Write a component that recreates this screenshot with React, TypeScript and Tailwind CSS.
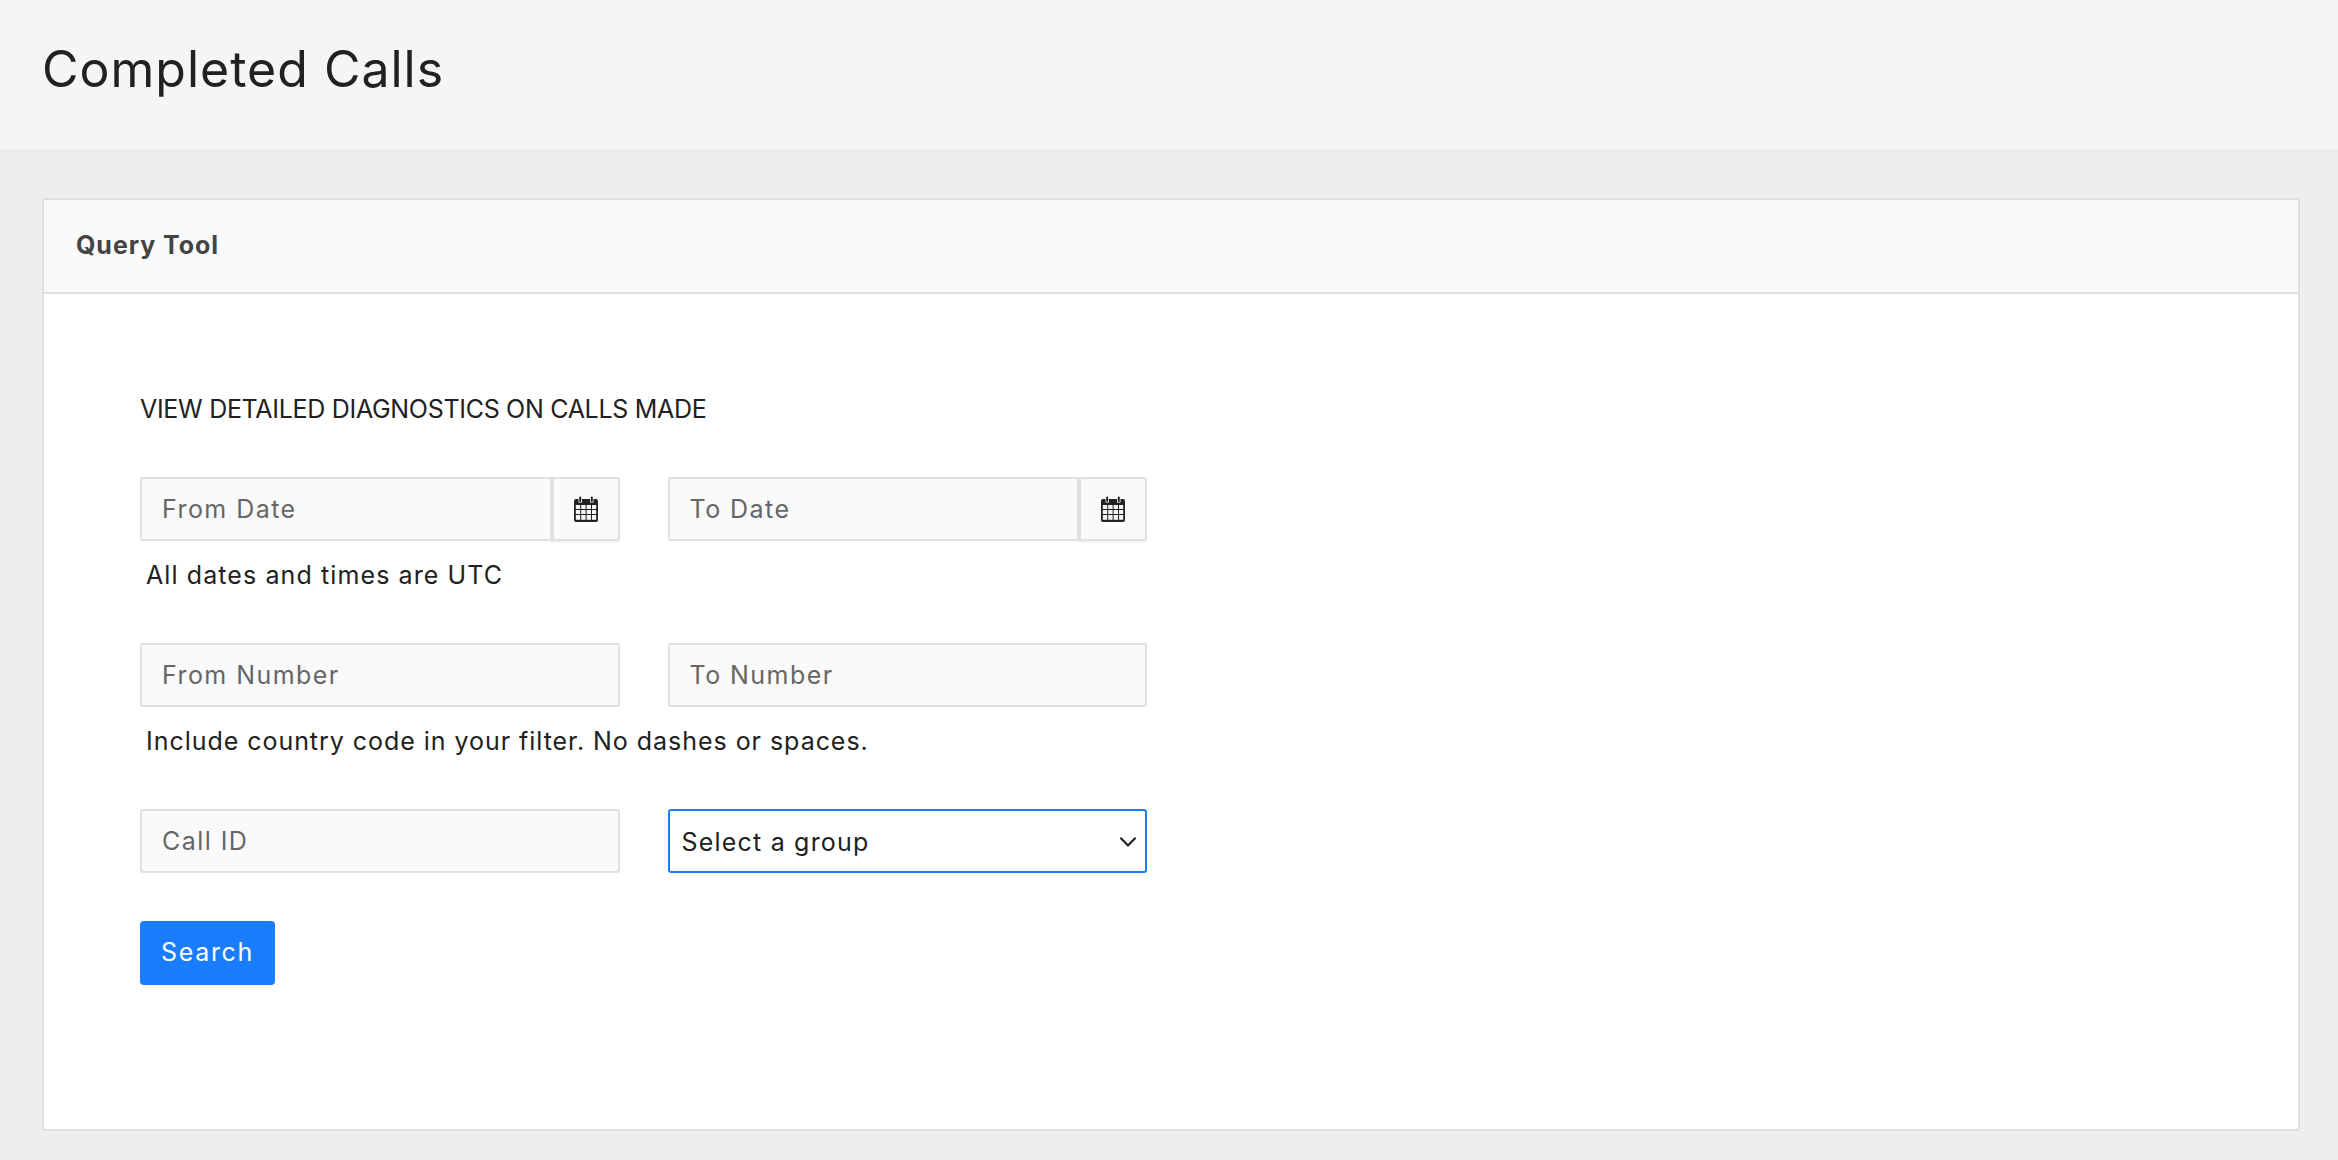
const fieldClass =
  "h-[64px] w-full rounded-[3px] border-2 border-[#e0e0e0] bg-[#fafafa] px-[20px] text-[25px] tracking-[1.45px] text-[#212121] outline-none placeholder:text-[#666666]";

function CalendarIcon() {
  return (
    <svg width="24" height="26" viewBox="0 0 24 26" className="block">
      <path
        d="M2 3h2.5v3.5h3.5V3h8v3.5h3.5V3H22a2 2 0 0 1 2 2v19a2 2 0 0 1-2 2H2a2 2 0 0 1-2-2V5a2 2 0 0 1 2-2z"
        fill="#212121"
      />
      <rect x="5.2" y="0.5" width="2" height="5.5" rx="1" fill="#212121" />
      <rect x="16.8" y="0.5" width="2" height="5.5" rx="1" fill="#212121" />
      <g fill="#f4f4f4">
        <rect x="1.8" y="9" width="4.4" height="4" />
        <rect x="7.2" y="9" width="4.4" height="4" />
        <rect x="12.6" y="9" width="4.4" height="4" />
        <rect x="18" y="9" width="4.2" height="4" />
        <rect x="1.8" y="14" width="4.4" height="4" />
        <rect x="7.2" y="14" width="4.4" height="4" />
        <rect x="12.6" y="14" width="4.4" height="4" />
        <rect x="18" y="14" width="4.2" height="4" />
        <rect x="1.8" y="19" width="4.4" height="4.8" />
        <rect x="7.2" y="19" width="4.4" height="4.8" />
        <rect x="12.6" y="19" width="4.4" height="4.8" />
        <rect x="18" y="19" width="4.2" height="4.8" />
      </g>
    </svg>
  );
}

function DateField({ placeholder }: { placeholder: string }) {
  return (
    <div className="flex h-[64px]">
      <input
        placeholder={placeholder}
        className="h-[64px] min-w-0 flex-1 rounded-l-[3px] border-2 border-r-0 border-[#e0e0e0] bg-[#fafafa] px-[20px] text-[25px] tracking-[1.45px] text-[#212121] outline-none placeholder:text-[#666666]"
      />
      <span className="flex h-[64px] w-[70px] items-center justify-center rounded-r-[3px] border-2 border-l-[4px] border-[#e0e0e0] bg-[#fafafa] shadow-[0_2px_0_#f4f4f4]">
        <CalendarIcon />
      </span>
    </div>
  );
}

export default function App() {
  return (
    <div className="min-h-[1160px] bg-[#eeeeee] font-['Inter','Liberation_Sans',sans-serif] text-[#212121]">
      <header className="flex h-[149px] items-center bg-[#f5f5f5] px-[42px] pb-[12px]">
        <h1 className="text-[50px] leading-none font-normal tracking-[1px]">Completed Calls</h1>
      </header>

      <main className="pt-[49px] pr-[38px] pl-[42px]">
        <section className="h-[933px] rounded-[3px] border-2 border-[#e0e0e0] bg-white">
          <div className="flex h-[94px] items-center border-b-2 border-[#e0e0e0] bg-[#fafafa] px-[32px]">
            <h2 className="text-[25px] font-bold tracking-[0.95px] text-[#444444]">Query Tool</h2>
          </div>

          <div className="pt-[97px] pl-[96px]">
            <p className="text-[25px] leading-[36px] tracking-[-0.3px]">VIEW DETAILED DIAGNOSTICS ON CALLS MADE</p>

            <div className="mt-[50px] grid w-[1007px] grid-cols-2 gap-x-[48px]">
              <DateField placeholder="From Date" />
              <DateField placeholder="To Date" />
            </div>
            <p className="mt-[16px] ml-[6px] h-[86px] text-[25px] leading-[36px] tracking-[1.1px]">
              All dates and times are UTC
            </p>

            <div className="grid w-[1007px] grid-cols-2 gap-x-[48px]">
              <input placeholder="From Number" className={fieldClass} />
              <input placeholder="To Number" className={fieldClass} />
            </div>
            <p className="mt-[16px] ml-[6px] h-[86px] text-[25px] leading-[36px] tracking-[0.96px]">
              Include country code in your filter. No dashes or spaces.
            </p>

            <div className="grid w-[1007px] grid-cols-2 gap-x-[48px]">
              <input placeholder="Call ID" className={fieldClass} />
              <div className="relative">
                <select className="h-[64px] w-full appearance-none rounded-[3px] border-2 border-[#1a7cff] bg-white px-[12px] pt-[4px] text-[25px] tracking-[1.2px] text-[#212121] outline-none">
                  <option>Select a group</option>
                </select>
                <svg
                  width="16"
                  height="10"
                  viewBox="0 0 16 10"
                  fill="none"
                  stroke="#212121"
                  strokeWidth="2.2"
                  strokeLinecap="round"
                  strokeLinejoin="round"
                  className="pointer-events-none absolute top-[28px] right-[11px]"
                >
                  <path d="M1.2 1.4 8 8.4l6.8-7" />
                </svg>
              </div>
            </div>

            <button className="mt-[48px] h-[64px] w-[135px] rounded-[4px] bg-[#1a7cff] text-[25px] tracking-[1.7px] text-white">
              Search
            </button>
          </div>
        </section>
      </main>
    </div>
  );
}
